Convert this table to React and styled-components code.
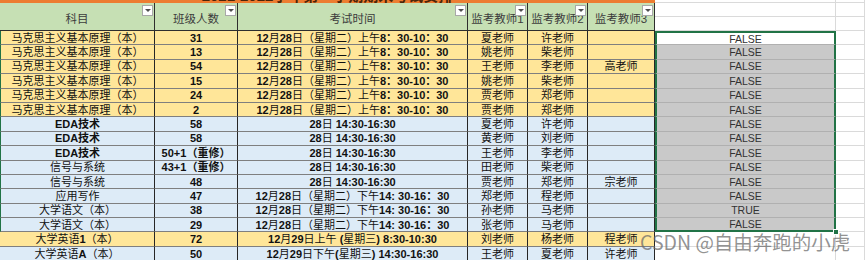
import styled, { createGlobalStyle } from "styled-components"

const YELLOW = "#FFE699"
const BLUE = "#DDEBF7"
const SEL = "#217346"

const GlobalStyle = createGlobalStyle`
  html, body {
    margin: 0;
    padding: 0;
    background: #ffffff;
    overflow: hidden;
    height: 260px;
  }
  * { box-sizing: border-box; }
`

const T1 = "12月28日（星期二）上午8：30-10：30"
const T2 = "28日 14:30-16:30"
const T3 = "12月28日（星期二）下午14: 30-16：30"
const MKS = "马克思主义基本原理（本）"

const rows = [
  { s: MKS, n: "31", t: T1, a: "夏老师", b: "许老师", c: "", r: "FALSE", bg: YELLOW },
  { s: MKS, n: "13", t: T1, a: "姚老师", b: "柴老师", c: "", r: "FALSE", bg: YELLOW },
  { s: MKS, n: "54", t: T1, a: "王老师", b: "李老师", c: "高老师", r: "FALSE", bg: YELLOW },
  { s: MKS, n: "15", t: T1, a: "姚老师", b: "柴老师", c: "", r: "FALSE", bg: YELLOW },
  { s: MKS, n: "24", t: T1, a: "贾老师", b: "郑老师", c: "", r: "FALSE", bg: YELLOW },
  { s: MKS, n: "2", t: T1, a: "贾老师", b: "郑老师", c: "", r: "FALSE", bg: YELLOW },
  { s: "EDA技术", sb: true, n: "58", t: T2, a: "夏老师", b: "许老师", c: "", r: "FALSE", bg: BLUE },
  { s: "EDA技术", sb: true, n: "58", t: T2, a: "黄老师", b: "刘老师", c: "", r: "FALSE", bg: BLUE },
  { s: "EDA技术", sb: true, n: "50+1（重修）", t: T2, a: "王老师", b: "李老师", c: "", r: "FALSE", bg: BLUE },
  { s: "信号与系统", n: "43+1（重修）", t: T2, a: "田老师", b: "柴老师", c: "", r: "FALSE", bg: BLUE },
  { s: "信号与系统", n: "48", t: T2, a: "贾老师", b: "郑老师", c: "宗老师", r: "FALSE", bg: BLUE },
  { s: "应用写作", n: "47", t: T3, a: "郑老师", b: "程老师", c: "", r: "FALSE", bg: BLUE },
  { s: "大学语文（本）", n: "38", t: T3, a: "孙老师", b: "马老师", c: "", r: "TRUE", bg: BLUE },
  { s: "大学语文（本）", n: "29", t: T3, a: "张老师", b: "马老师", c: "", r: "FALSE", bg: BLUE },
  { s: "大学英语1（本）", n: "72", t: "12月29日上午 (星期三) 8:30-10:30", a: "刘老师", b: "杨老师", c: "程老师", r: null, bg: YELLOW },
  { s: "大学英语A（本）", n: "50", t: "12月29日下午(星期三) 14:30-16:30", a: "王老师", b: "夏老师", c: "许老师", r: null, bg: BLUE },
]

const headers = ["科目", "班级人数", "考试时间", "监考教师1", "监考教师2", "监考教师3"]

// digits and latin in bold, like the mixed-font cells of the sheet
function Rich({ text }) {
  const parts = text.split(/([0-9A-Za-z:：+\-() ]+)/)
  return (
    <span>
      {parts.map((p, i) =>
        /^[0-9A-Za-z:：+\-() ]+$/.test(p) ? <b key={i}>{p}</b> : <span key={i}>{p}</span>
      )}
    </span>
  )
}

export default function App() {
  const selCount = rows.filter(r => r.r).length
  return (
    <>
      <GlobalStyle />
      <Sheet>
        <TitleBand>
          <TitleText>2021-2022学年第一学期期末考试安排</TitleText>
        </TitleBand>
        <Blank />
        <Blank />

        {headers.map(h => (
          <HeaderCell key={h}>
            {h}
            <FilterButton />
          </HeaderCell>
        ))}
        <HeaderBlank />
        <HeaderBlank />

        {rows.map((row, i) => (
          <Row key={i} row={row} index={i} last={i === selCount - 1} />
        ))}

        <Watermark>CSDN @自由奔跑的小虎</Watermark>
      </Sheet>
    </>
  )
}

function Row({ row, index, last }) {
  const edge = index < 14
  return (
    <>
      <Cell $bg={row.bg} $bold={row.sb} $edge={edge}>
        {row.sb ? row.s : <Rich text={row.s} />}
      </Cell>
      <Cell $bg={row.bg} $bold>{row.n}</Cell>
      <Cell $bg={row.bg}><Rich text={row.t} /></Cell>
      <Cell $bg={row.bg}>{row.a}</Cell>
      <Cell $bg={row.bg}>{row.b}</Cell>
      <Cell $bg={row.bg}>{row.c}</Cell>
      {row.r ? (
        <ResultCell $active={index === 0} $first={index === 0} $last={last}>
          {row.r}
          {last && <Handle />}
        </ResultCell>
      ) : (
        <Blank />
      )}
      <Blank />
    </>
  )
}

const Sheet = styled.div`
  position: relative;
  width: 865px;
  display: grid;
  grid-template-columns: 155px 83px 230px 60px 60px 67px 181px 1fr;
  grid-template-rows: 3px 28px repeat(16, 14.4px);
  font-family: "Liberation Sans", "Noto Sans CJK SC", sans-serif;
`

const TitleBand = styled.div`
  grid-column: 1 / 7;
  background: #ed7d31;
  overflow: hidden;
  display: flex;
  justify-content: center;
  align-items: flex-end;
`

const TitleText = styled.div`
  font-size: 15px;
  line-height: 15px;
  font-weight: 700;
  color: #4a2408;
  margin-bottom: 0;
  white-space: nowrap;
`

const Blank = styled.div`
  background: #ffffff;
  border-right: 1px solid #dadada;
  border-bottom: 1px solid #dadada;
`

const HeaderBlank = styled(Blank)`
  background: linear-gradient(
    to bottom,
    transparent 13px,
    #dadada 13px,
    #dadada 14px,
    transparent 14px
  );
`

const HeaderCell = styled.div`
  position: relative;
  background: #c6e0b4;
  border-right: 1px solid #2e2e2e;
  border-bottom: 1px solid #2e2e2e;
  display: flex;
  align-items: center;
  justify-content: center;
  padding-top: 2px;
  font-size: 11.5px;
  color: #3c3c3c;
  white-space: nowrap;
`

const FilterButton = styled.span`
  position: absolute;
  top: 2px;
  right: 1px;
  width: 11px;
  height: 11px;
  background: #ffffff;
  border: 1px solid #a8a8a8;
  display: flex;
  align-items: center;
  justify-content: center;

  &::after {
    content: "";
    border-left: 3px solid transparent;
    border-right: 3px solid transparent;
    border-top: 3px solid #505050;
  }
`

const Cell = styled.div`
  background: ${p => p.$bg};
  border-right: 1px solid #262626;
  border-bottom: 1px solid #7f7f7f;
  border-left: ${p => (p.$edge ? `1px solid ${SEL}` : "none")};
  display: flex;
  align-items: center;
  justify-content: center;
  white-space: pre;
  overflow: hidden;
  font-size: 11px;
  line-height: 14px;
  color: #111111;
  font-weight: ${p => (p.$bold ? 700 : 400)};

  b { font-weight: 700; }
`

const ResultCell = styled.div`
  position: relative;
  background: ${p => (p.$active ? "#ffffff" : "#c9c9c9")};
  border-left: 2px solid ${SEL};
  border-right: 2px solid ${SEL};
  border-top: ${p => (p.$first ? `2px solid ${SEL}` : "none")};
  border-bottom: ${p => (p.$last ? `2px solid ${SEL}` : "1px solid #b0b0b0")};
  display: flex;
  align-items: center;
  justify-content: center;
  font-size: 10.5px;
  color: #333333;
`

const Handle = styled.span`
  position: absolute;
  right: -5px;
  bottom: -5px;
  width: 6px;
  height: 6px;
  background: ${SEL};
  border: 1px solid #ffffff;
`

const Watermark = styled.div`
  position: absolute;
  left: 640px;
  top: 231px;
  font-family: "Noto Sans CJK SC", sans-serif;
  font-size: 19.5px;
  line-height: 21px;
  color: rgba(105, 105, 105, 0.72);
  white-space: nowrap;
`
